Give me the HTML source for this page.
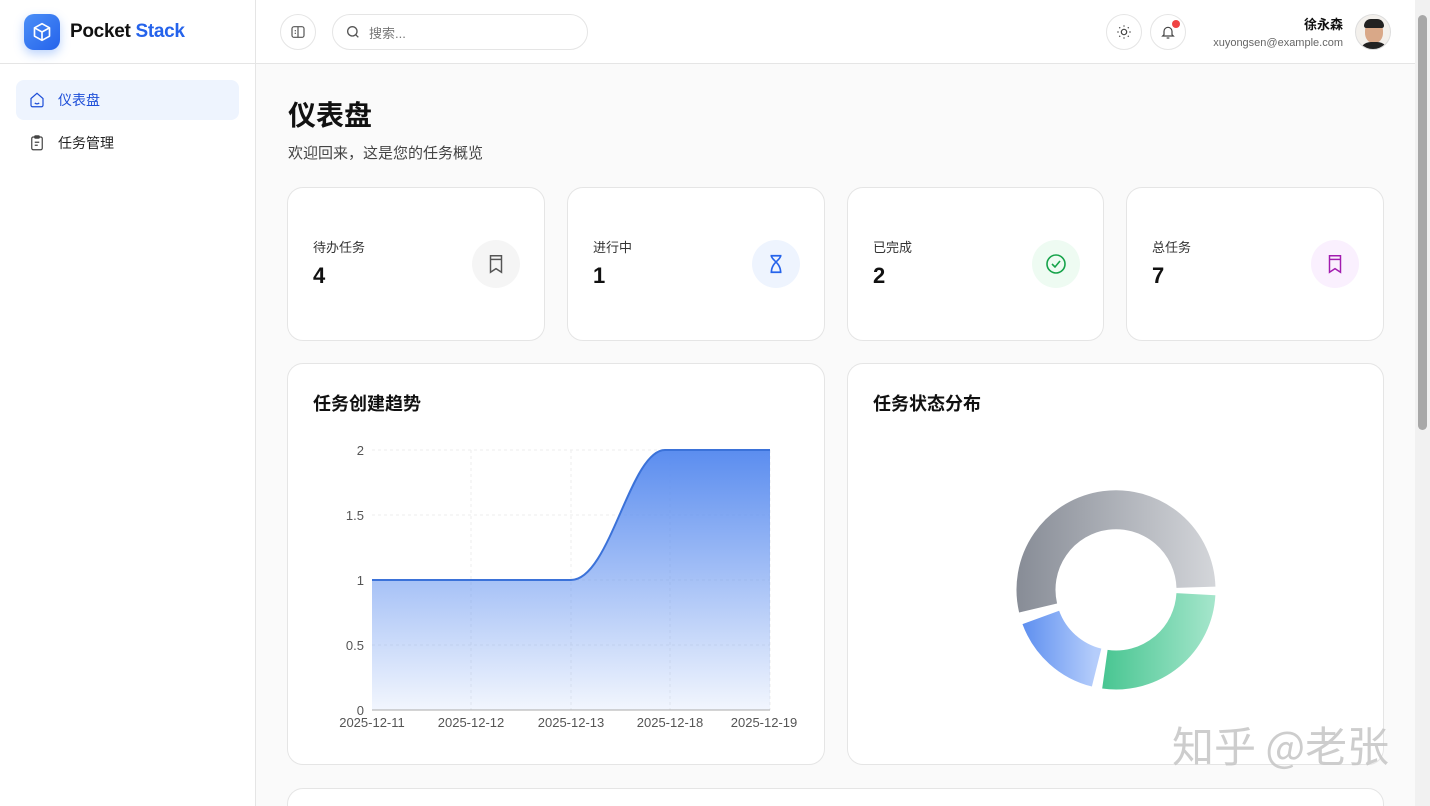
<!DOCTYPE html>
<html style="width:1430px;height:806px;overflow:hidden"><head><meta charset="utf-8"><style>
*{box-sizing:border-box;margin:0;padding:0}
body{width:1430px;height:806px;overflow:hidden;font-family:"Liberation Sans","Noto Sans CJK SC",sans-serif;background:#fafafa;position:relative;color:#111}
.side{position:absolute;left:0;top:0;width:256px;height:806px;background:#fff;border-right:1px solid #e5e5e5}
.logo{height:64px;border-bottom:1px solid #e5e5e5;display:flex;align-items:center;padding-left:24px}
.lg{width:36px;height:36px;border-radius:10px;background:linear-gradient(135deg,#4b8ff7,#2563eb);box-shadow:0 4px 10px rgba(59,130,246,.35);display:flex;align-items:center;justify-content:center}
.brand{margin-left:10px;font-size:19px;font-weight:bold;letter-spacing:-.3px}
.nav{position:absolute;left:16px;width:223px;height:40px;border-radius:8px;display:flex;align-items:center;padding-left:12px;font-size:14px}
.nav span{margin-left:12px}
.top{position:absolute;left:256px;top:0;right:15px;height:64px;background:#fff;border-bottom:1px solid #e5e5e5}
.cb{position:absolute;width:36px;height:36px;border:1px solid #e5e5e5;border-radius:50%;display:flex;align-items:center;justify-content:center;background:#fff}
.card{position:absolute;background:#fff;border:1px solid #e5e5e5;border-radius:16px}
.sl{position:absolute;left:25px;top:49px;font-size:13px;color:#333}
.sn{position:absolute;left:25px;top:75px;font-size:22px;font-weight:bold}
.ic{position:absolute;left:184px;top:52px;width:48px;height:48px;border-radius:50%;display:flex;align-items:center;justify-content:center}
.ct{position:absolute;left:25px;top:26px;font-size:18px;font-weight:bold}
</style></head><body>
<div class="side">
 <div class="logo"><div class="lg"><svg width="20" height="20" viewBox="0 0 24 24" fill="none" stroke="#fff" stroke-width="2" stroke-linejoin="round"><path d="M12 2 21 7v10l-9 5-9-5V7z"/><path d="M3 7l9 5 9-5M12 12v10"/></svg></div><div class="brand">Pocket <span style="color:#2563eb">Stack</span></div></div>
 <div class="nav" style="top:80px;background:#eef4fe;color:#1d4ed8"><svg width="18" height="18" viewBox="0 0 24 24" fill="none" stroke="#1d4ed8" stroke-width="1.6"><path d="M4 10 12 3l8 7v9a2 2 0 0 1-2 2H6a2 2 0 0 1-2-2z"/><path d="M9 16c2 1.5 4 1.5 6 0"/></svg><span>仪表盘</span></div>
 <div class="nav" style="top:123px;color:#222"><svg width="18" height="18" viewBox="0 0 24 24" fill="none" stroke="#444" stroke-width="1.6"><rect x="5" y="4" width="14" height="17" rx="2"/><rect x="9" y="2.5" width="6" height="3" rx="1"/><path d="M9 11h6M9 15h4"/></svg><span>任务管理</span></div>
</div>
<div class="top">
 <div class="cb" style="left:24px;top:14px"><svg width="16" height="16" viewBox="0 0 24 24" fill="none" stroke="#555" stroke-width="1.8"><rect x="3" y="4" width="18" height="16" rx="3"/><path d="M12 4v16M7 10h2M7 14h2"/></svg></div>
 <div style="position:absolute;left:76px;top:14px;width:256px;height:36px;border:1px solid #e5e5e5;border-radius:18px;display:flex;align-items:center;padding-left:12px;font-size:13px;color:#777"><svg width="16" height="16" viewBox="0 0 24 24" fill="none" stroke="#555" stroke-width="2"><circle cx="11" cy="11" r="7"/><path d="m20 20-4-4"/></svg><span style="margin-left:8px">搜索...</span></div>
 <div class="cb" style="left:850px;top:14px"><svg width="16" height="16" viewBox="0 0 24 24" fill="none" stroke="#444" stroke-width="1.8"><circle cx="12" cy="12" r="4"/><path d="M12 2v2M12 20v2M2 12h2M20 12h2M4.9 4.9l1.4 1.4M17.7 17.7l1.4 1.4M4.9 19.1l1.4-1.4M17.7 6.3l1.4-1.4"/></svg></div>
 <div class="cb" style="left:894px;top:14px"><svg width="16" height="16" viewBox="0 0 24 24" fill="none" stroke="#444" stroke-width="1.8"><path d="M6 16V11a6 6 0 0 1 12 0v5l2 2H4z"/><path d="M10 21h4"/></svg><div style="position:absolute;right:5px;top:5px;width:8px;height:8px;border-radius:50%;background:#ef4444"></div></div>
 <div style="position:absolute;right:72px;top:14px;text-align:right"><div style="font-size:13px;font-weight:bold">徐永森</div><div style="font-size:11px;color:#666;margin-top:4px">xuyongsen@example.com</div></div>
 <div style="position:absolute;left:1099px;top:14px;width:36px;height:36px;border-radius:50%;border:1px solid #ddd;overflow:hidden;background:#f3f0ec"><div style="position:absolute;left:9px;top:6px;width:18px;height:22px;border-radius:45%;background:#d9a888"></div><div style="position:absolute;left:8px;top:4px;width:20px;height:9px;border-radius:10px 10px 3px 3px;background:#222"></div><div style="position:absolute;left:3px;top:27px;width:30px;height:14px;border-radius:12px 12px 0 0;background:#222"></div></div>
</div>
<div style="position:absolute;left:288px;top:94px;font-size:28px;font-weight:bold">仪表盘</div>
<div style="position:absolute;left:288px;top:142px;font-size:15px;color:#444">欢迎回来，这是您的任务概览</div>

<div class="card" style="left:287px;top:187px;width:258px;height:154px"><div class="sl">待办任务</div><div class="sn">4</div><div class="ic" style="background:#f5f5f5"><svg width="22" height="22" viewBox="0 0 24 24" fill="none" stroke="#555" stroke-width="1.6"><path d="M6 3h12v18l-6-4-6 4z"/><path d="M6 7h12"/></svg></div></div>
<div class="card" style="left:567px;top:187px;width:258px;height:154px"><div class="sl">进行中</div><div class="sn">1</div><div class="ic" style="background:#eef4fe"><svg width="22" height="22" viewBox="0 0 24 24" fill="none" stroke="#2563eb" stroke-width="1.8"><path d="M6 3h12M6 21h12M7 3c0 5 10 7 10 18M17 3c0 5-10 7-10 18"/></svg></div></div>
<div class="card" style="left:847px;top:187px;width:257px;height:154px"><div class="sl">已完成</div><div class="sn">2</div><div class="ic" style="background:#eefbf2"><svg width="24" height="24" viewBox="0 0 24 24" fill="none" stroke="#16a34a" stroke-width="1.6"><circle cx="12" cy="12" r="9"/><path d="m8 12 3 3 5-6"/></svg></div></div>
<div class="card" style="left:1126px;top:187px;width:258px;height:154px"><div class="sl">总任务</div><div class="sn">7</div><div class="ic" style="background:#faf0fe"><svg width="22" height="22" viewBox="0 0 24 24" fill="none" stroke="#a21caf" stroke-width="1.6"><path d="M6 3h12v18l-6-4-6 4z"/><path d="M6 7h12"/></svg></div></div>

<div class="card" style="left:287px;top:363px;width:538px;height:402px"><div class="ct">任务创建趋势</div></div>
<div class="card" style="left:847px;top:363px;width:537px;height:402px"><div class="ct">任务状态分布</div></div>
<div class="card" style="left:287px;top:788px;width:1097px;height:40px;border-radius:16px 16px 0 0"></div>

<svg style="position:absolute;left:0;top:0" width="1430" height="806">
<defs>
<linearGradient id="ag" x1="0" y1="450" x2="0" y2="710" gradientUnits="userSpaceOnUse"><stop offset="0" stop-color="#5b8def"/><stop offset="1" stop-color="#5b8def" stop-opacity=".08"/></linearGradient>
<linearGradient id="gg" x1="1016" y1="0" x2="1216" y2="0" gradientUnits="userSpaceOnUse"><stop offset="0" stop-color="#878c96"/><stop offset="1" stop-color="#d4d6da"/></linearGradient>
<linearGradient id="gn" x1="1090" y1="0" x2="1216" y2="0" gradientUnits="userSpaceOnUse"><stop offset="0" stop-color="#3ec28b"/><stop offset="1" stop-color="#a6e6cc"/></linearGradient>
<linearGradient id="bl" x1="1020" y1="0" x2="1095" y2="0" gradientUnits="userSpaceOnUse"><stop offset="0" stop-color="#5b8def"/><stop offset="1" stop-color="#b5cdfb"/></linearGradient>
</defs>
<g stroke="#eee" stroke-dasharray="3 3" stroke-width="1">
<path d="M372 450H770M372 515H770M372 580H770M372 645H770M471 450V710M571 450V710M670 450V710M770 450V710"/></g>
<path d="M372 580H571C610 580 630 450 665 450H770V710H372Z" fill="url(#ag)"/>
<path d="M372 580H571C610 580 630 450 665 450H770" fill="none" stroke="#3b72d9" stroke-width="2"/>
<path d="M372 710H770" stroke="#aaa" stroke-width="1"/>
<g font-size="13" fill="#555" font-family="Liberation Sans" text-anchor="end">
<text x="364" y="455">2</text><text x="364" y="520">1.5</text><text x="364" y="585">1</text><text x="364" y="650">0.5</text><text x="364" y="715">0</text></g>
<g font-size="13" fill="#555" font-family="Liberation Sans" text-anchor="middle">
<text x="372" y="727">2025-12-11</text><text x="471" y="727">2025-12-12</text><text x="571" y="727">2025-12-13</text><text x="670" y="727">2025-12-18</text><text x="764" y="727">2025-12-19</text></g>
<g fill="none" stroke-width="39">
<path d="M1038.1 608 A80 80 0 1 1 1195.95 587.2" stroke="url(#gg)"/>
<path d="M1195.9 594.2 A80 80 0 0 1 1104.9 669.2" stroke="url(#gn)"/>
<path d="M1096.6 667.6 A80 80 0 0 1 1040.8 617.4" stroke="url(#bl)"/>
</g>
<text x="1172" y="762" font-size="42" fill="#c4c4c4" fill-opacity=".85" font-family="Noto Sans CJK SC,sans-serif">知乎 @老张</text>
</svg>
<div style="position:absolute;left:1415px;top:0;width:15px;height:806px;background:#f1f1f1"><div style="position:absolute;left:3px;top:15px;width:9px;height:415px;border-radius:5px;background:#a8a8a8"></div></div>
</body></html>
